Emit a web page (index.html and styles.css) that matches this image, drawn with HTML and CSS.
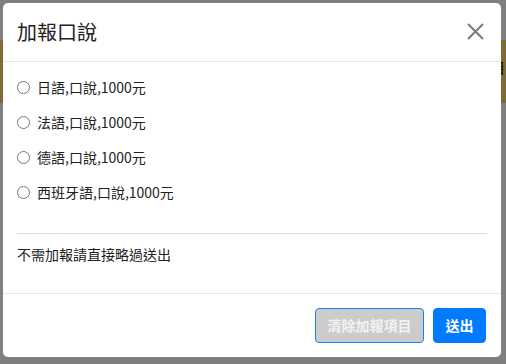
FILE: index.html
```html
<!DOCTYPE html>
<html lang="zh-Hant">
<head>
<meta charset="utf-8">
<title>加報口說</title>
<link rel="stylesheet" href="styles.css">
</head>
<body>
<div class="page">
  <div class="banner"><span class="banner-text">目</span></div>
</div>
<div class="backdrop"></div>
<div class="modal">
  <div class="modal-header">
    <h5 class="modal-title">加報口說</h5>
    <button class="close" type="button" aria-label="Close">
      <svg width="19" height="17" viewBox="0 0 19 17"><path d="M2 1 L17 16 M17 1 L2 16" stroke="#7a7a7a" stroke-width="2" fill="none"/></svg>
    </button>
  </div>
  <div class="modal-body">
    <div class="options">
      <label class="opt"><input type="radio" name="oral"><span>日語,口說,1000元</span></label>
      <label class="opt"><input type="radio" name="oral"><span>法語,口說,1000元</span></label>
      <label class="opt"><input type="radio" name="oral"><span>德語,口說,1000元</span></label>
      <label class="opt"><input type="radio" name="oral"><span>西班牙語,口說,1000元</span></label>
    </div>
    <hr class="divider">
    <p class="note">不需加報請直接略過送出</p>
  </div>
  <div class="modal-footer">
    <button class="btn btn-clear" type="button">清除加報項目</button>
    <button class="btn btn-submit" type="button">送出</button>
  </div>
</div>
</body>
</html>
```
FILE: styles.css
```css
html, body {
  margin: 0;
  padding: 0;
  width: 506px;
  height: 364px;
  overflow: hidden;
  font-family: "Noto Sans CJK TC", "Noto Sans", sans-serif;
  color: #212529;
  background: #fff;
}
.page {
  padding-top: 40px;
}
.banner {
  height: 63px;
  background: #ffd46a;
  display: flex;
  justify-content: flex-end;
  align-items: center;
}
.banner-text {
  font-size: 14px;
  line-height: 16px;
  color: #000;
  margin-right: 1px;
  margin-top: -10px;
}
.backdrop {
  position: absolute;
  inset: 0;
  background: rgba(0, 0, 0, 0.5);
}
.modal {
  position: absolute;
  left: 3px;
  top: 3px;
  width: 498px;
  height: 354px;
  background: #fff;
  border-radius: 5px;
  display: flex;
  flex-direction: column;
  box-sizing: border-box;
}
.modal-header {
  height: 59px;
  box-sizing: border-box;
  border-bottom: 1px solid #e6e6e6;
  display: flex;
  align-items: center;
  justify-content: space-between;
  padding: 0 16px 0 14px;
}
.modal-title {
  margin: 0;
  font-size: 20px;
  font-weight: 400;
  line-height: 30px;
  color: #222;
}
.close {
  border: 0;
  background: none;
  padding: 0;
  margin: 0;
  width: 19px;
  height: 17px;
  display: flex;
  margin-top: -2px;
}
.modal-body {
  padding: 15px 14px 0 14px;
  flex: 1;
}
.options {
  display: flex;
  flex-direction: column;
  gap: 14px;
}
.opt {
  display: flex;
  align-items: center;
  font-size: 14px;
  line-height: 21px;
  height: 21px;
  color: #222;
}
.opt input {
  margin: 0 7px 0 0;
  width: 13px;
  height: 13px;
  appearance: none;
  -webkit-appearance: none;
  border: 1px solid #767676;
  border-radius: 50%;
  box-sizing: border-box;
  background: #fff;
}
.divider {
  margin: 30px 0 0 0;
  border: 0;
  border-top: 1px solid #dcdcdc;
}
.note {
  margin: 10px 0 0 0;
  font-size: 14px;
  line-height: 21px;
  color: #222;
}
.modal-footer {
  height: 64px;
  box-sizing: border-box;
  border-top: 1px solid #e6e6e6;
  display: flex;
  justify-content: flex-end;
  align-items: flex-start;
  padding: 14px 15px 0 0;
  gap: 9px;
}
.btn {
  font-family: inherit;
  font-size: 14px;
  font-weight: 700;
  line-height: 21px;
  padding: 6px 0;
  text-align: center;
  white-space: nowrap;
  border-radius: 4px;
  height: 35px;
  box-sizing: border-box;
  color: #fff;
  cursor: pointer;
}
.btn-clear {
  width: 109px;
  background: #cccccc;
  border: 1px solid #1a82f7;
  color: #f2f2f2;
}
.btn-submit {
  width: 53px;
  background: #007bff;
  border: 1px solid #007bff;
}
```
